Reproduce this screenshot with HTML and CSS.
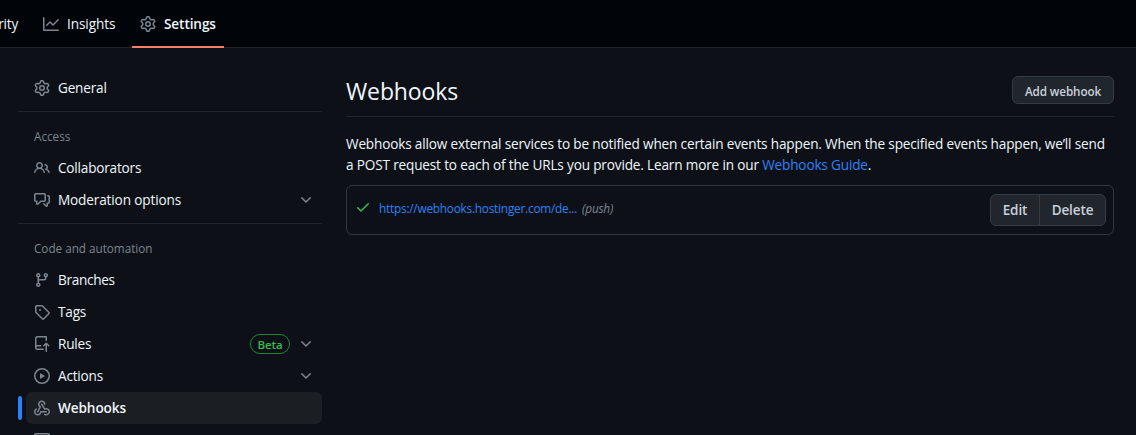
FILE: index.html
```
<!DOCTYPE html>
<html lang="en">
<head>
<meta charset="utf-8">
<title>Webhooks</title>
<link rel="stylesheet" href="styles.css">
</head>
<body>
<svg class="defs" aria-hidden="true">
  <symbol id="gear" viewBox="0 0 16 16"><path d="M8 0a8.2 8.2 0 0 1 .701.031C9.444.095 9.99.645 10.16 1.29l.288 1.107c.018.066.079.158.212.224.231.114.454.243.668.386.123.082.233.09.299.071l1.103-.303c.644-.176 1.392.021 1.82.63.27.385.506.792.704 1.218.315.675.111 1.422-.364 1.891l-.814.806c-.049.048-.098.147-.088.294.016.257.016.515 0 .772-.01.147.038.246.088.294l.814.806c.475.469.679 1.216.364 1.891a7.977 7.977 0 0 1-.704 1.217c-.428.61-1.176.807-1.82.63l-1.102-.302c-.067-.019-.177-.011-.3.071a5.909 5.909 0 0 1-.668.386c-.133.066-.194.158-.211.224l-.29 1.106c-.168.646-.715 1.196-1.458 1.26a8.006 8.006 0 0 1-1.402 0c-.743-.064-1.289-.614-1.458-1.26l-.289-1.106c-.018-.066-.079-.158-.212-.224a5.738 5.738 0 0 1-.668-.386c-.123-.082-.233-.09-.299-.071l-1.103.303c-.644.176-1.392-.021-1.82-.63a8.12 8.12 0 0 1-.704-1.218c-.315-.675-.111-1.422.363-1.891l.815-.806c.05-.048.098-.147.088-.294a6.214 6.214 0 0 1 0-.772c.01-.147-.038-.246-.088-.294l-.815-.806C.635 6.045.431 5.298.746 4.623a7.92 7.92 0 0 1 .704-1.217c.428-.61 1.176-.807 1.82-.63l1.102.302c.067.019.177.011.3-.071.214-.143.437-.272.668-.386.133-.066.194-.158.211-.224l.29-1.106C6.009.645 6.556.095 7.299.03 7.53.01 7.764 0 8 0Zm-.571 1.525c-.036.003-.108.036-.137.146l-.289 1.105c-.147.561-.549.967-.998 1.189-.173.086-.34.183-.5.29-.417.278-.97.423-1.529.27l-1.103-.303c-.109-.03-.175.016-.195.045-.22.312-.412.644-.573.99-.014.031-.021.11.059.19l.815.806c.411.406.562.957.53 1.456a4.709 4.709 0 0 0 0 .582c.032.499-.119 1.05-.53 1.456l-.815.806c-.081.08-.073.159-.059.19.162.346.353.677.573.989.02.03.085.076.195.046l1.102-.303c.56-.153 1.113-.008 1.53.27.161.107.328.204.501.29.447.222.85.629.997 1.189l.289 1.105c.029.109.101.143.137.146a6.6 6.6 0 0 0 1.142 0c.036-.003.108-.036.137-.146l.289-1.105c.147-.561.549-.967.998-1.189.173-.086.34-.183.5-.29.417-.278.97-.423 1.529-.27l1.103.303c.109.029.175-.016.195-.045.22-.313.411-.644.573-.99.014-.031.021-.11-.059-.19l-.815-.806c-.411-.406-.562-.957-.53-1.456a4.709 4.709 0 0 0 0-.582c-.032-.499.119-1.05.53-1.456l.815-.806c.081-.08.073-.159.059-.19a6.464 6.464 0 0 0-.573-.989c-.02-.03-.085-.076-.195-.046l-1.102.303c-.56.153-1.113.008-1.53-.27a4.44 4.44 0 0 0-.501-.29c-.447-.222-.85-.629-.997-1.189l-.289-1.105c-.029-.11-.101-.143-.137-.146a6.6 6.6 0 0 0-1.142 0ZM11 8a3 3 0 1 1-6 0 3 3 0 0 1 6 0ZM9.5 8a1.5 1.5 0 1 0-3.001.001A1.5 1.5 0 0 0 9.5 8Z"/></symbol>
  <symbol id="graph" viewBox="0 0 16 16"><path d="M1.5 1.75V13.5h13.75a.75.75 0 0 1 0 1.5H.75a.75.75 0 0 1-.75-.75V1.75a.75.75 0 0 1 1.5 0Zm14.28 2.53-5.25 5.25a.75.75 0 0 1-1.06 0L7 7.06 4.28 9.78a.751.751 0 0 1-1.042-.018.751.751 0 0 1-.018-1.042l3.25-3.25a.75.75 0 0 1 1.06 0L10 7.94l4.72-4.72a.751.751 0 0 1 1.042.018.751.751 0 0 1 .018 1.042Z"/></symbol>
  <symbol id="people" viewBox="0 0 16 16"><path d="M2 5.5a3.5 3.5 0 1 1 5.898 2.549 5.508 5.508 0 0 1 3.034 4.084.75.75 0 1 1-1.482.235 4 4 0 0 0-7.9 0 .75.75 0 0 1-1.482-.236A5.507 5.507 0 0 1 3.102 8.05 3.493 3.493 0 0 1 2 5.5ZM11 4a3.001 3.001 0 0 1 2.22 5.018 5.01 5.01 0 0 1 2.56 3.012.749.749 0 0 1-.885.954.752.752 0 0 1-.549-.514 3.507 3.507 0 0 0-2.522-2.372.75.75 0 0 1-.574-.73v-.352a.75.75 0 0 1 .416-.672A1.5 1.5 0 0 0 11 5.5.75.75 0 0 1 11 4Zm-5.5-.5a2 2 0 1 0-.001 3.999A2 2 0 0 0 5.5 3.5Z"/></symbol>
  <symbol id="discussion" viewBox="0 0 16 16"><path d="M1.75 1h8.5c.966 0 1.75.784 1.75 1.75v5.5A1.75 1.75 0 0 1 10.25 10H7.061l-2.574 2.573A1.458 1.458 0 0 1 2 11.543V10h-.25A1.75 1.75 0 0 1 0 8.25v-5.5C0 1.784.784 1 1.75 1ZM1.5 2.75v5.5c0 .138.112.25.25.25h1a.75.75 0 0 1 .75.75v2.19l2.72-2.72a.749.749 0 0 1 .53-.22h3.5a.25.25 0 0 0 .25-.25v-5.5a.25.25 0 0 0-.25-.25h-8.5a.25.25 0 0 0-.25.25Zm13 2a.25.25 0 0 0-.25-.25h-.5a.75.75 0 0 1 0-1.5h.5c.966 0 1.75.784 1.75 1.75v5.5A1.75 1.75 0 0 1 14.25 12H14v1.543a1.458 1.458 0 0 1-2.487 1.03L9.22 12.28a.749.749 0 0 1 .326-1.275.749.749 0 0 1 .734.215l2.22 2.22v-2.19a.75.75 0 0 1 .75-.75h1a.25.25 0 0 0 .25-.25Z"/></symbol>
  <symbol id="branch" viewBox="0 0 16 16"><path d="M9.5 3.25a2.25 2.25 0 1 1 3 2.122V6A2.5 2.5 0 0 1 10 8.5H6a1 1 0 0 0-1 1v1.128a2.251 2.251 0 1 1-1.5 0V5.372a2.25 2.25 0 1 1 1.5 0v1.836A2.493 2.493 0 0 1 6 7h4a1 1 0 0 0 1-1v-.628A2.25 2.25 0 0 1 9.5 3.25Zm-6 0a.75.75 0 1 0 1.5 0 .75.75 0 0 0-1.5 0Zm8.25-.75a.75.75 0 1 0 0 1.5.75.75 0 0 0 0-1.5ZM4.25 12a.75.75 0 1 0 0 1.5.75.75 0 0 0 0-1.5Z"/></symbol>
  <symbol id="tag" viewBox="0 0 16 16"><path d="M1 7.775V2.75C1 1.784 1.784 1 2.75 1h5.025c.464 0 .91.184 1.238.513l6.25 6.25a1.75 1.75 0 0 1 0 2.474l-5.026 5.026a1.75 1.75 0 0 1-2.474 0l-6.25-6.25A1.752 1.752 0 0 1 1 7.775Zm1.5 0c0 .066.026.13.073.177l6.25 6.25a.25.25 0 0 0 .354 0l5.025-5.025a.25.25 0 0 0 0-.354l-6.25-6.25a.25.25 0 0 0-.177-.073H2.75a.25.25 0 0 0-.25.25ZM6 5a1 1 0 1 1 0 2 1 1 0 0 1 0-2Z"/></symbol>
  <symbol id="repo-push" viewBox="0 0 16 16"><path d="M1 2.5A2.5 2.5 0 0 1 3.5 0h8.75a.75.75 0 0 1 .75.75v3.5a.75.75 0 0 1-1.5 0V1.5h-8a1 1 0 0 0-1 1v6.708A2.493 2.493 0 0 1 3.5 9h3.25a.75.75 0 0 1 0 1.5H3.5a1 1 0 0 0 0 2h5.75a.75.75 0 0 1 0 1.5H3.5A2.5 2.5 0 0 1 1 11.5Zm13.23 7.79h-.001l-1.224-1.224v6.184a.75.75 0 0 1-1.5 0V9.066L10.28 10.29a.75.75 0 0 1-1.06-1.061l2.505-2.504a.75.75 0 0 1 1.06 0L15.29 9.23a.751.751 0 0 1-.018 1.042.751.751 0 0 1-1.042.018Z"/></symbol>
  <symbol id="play" viewBox="0 0 16 16"><path d="M8 0a8 8 0 1 1 0 16A8 8 0 0 1 8 0ZM1.5 8a6.5 6.5 0 1 0 13 0 6.5 6.5 0 0 0-13 0Zm4.879-2.773 4.264 2.559a.25.25 0 0 1 0 .428l-4.264 2.559A.25.25 0 0 1 6 10.559V5.442a.25.25 0 0 1 .379-.215Z"/></symbol>
  <symbol id="webhook" viewBox="0 0 16 16"><path d="M5.5 4.25a2.25 2.25 0 0 1 4.5 0 .75.75 0 0 0 1.5 0 3.75 3.75 0 1 0-6.14 2.889l-2.272 4.258a.75.75 0 0 0 1.324.706L7 7.25a.75.75 0 0 0-.309-1.015A2.25 2.25 0 0 1 5.5 4.25Z"/><path d="M7.364 3.607a.75.75 0 0 1 1.03.257l2.608 4.349a3.75 3.75 0 1 1-.628 6.785.75.75 0 0 1 .752-1.299 2.25 2.25 0 1 0-.033-3.88.75.75 0 0 1-1.03-.256L7.107 4.636a.75.75 0 0 1 .257-1.03Z"/><path d="M2.9 8.776A.75.75 0 0 1 2.625 9.8 2.25 2.25 0 1 0 6 11.75a.75.75 0 0 1 .75-.751h5.5a.75.75 0 0 1 0 1.5H7.425a3.751 3.751 0 1 1-5.55-3.998.75.75 0 0 1 1.024.274Z"/></symbol>
  <symbol id="server" viewBox="0 0 16 16"><path d="M1.75 1h12.5c.966 0 1.75.784 1.75 1.75v4c0 .372-.116.717-.314 1 .198.283.314.628.314 1v4a1.75 1.75 0 0 1-1.75 1.75H1.75A1.75 1.75 0 0 1 0 12.75v-4c0-.358.109-.707.314-1a1.739 1.739 0 0 1-.314-1v-4C0 1.784.784 1 1.75 1ZM1.5 2.75v4c0 .138.112.25.25.25h12.5a.25.25 0 0 0 .25-.25v-4a.25.25 0 0 0-.25-.25H1.75a.25.25 0 0 0-.25.25Z"/></symbol>
  <symbol id="chevron" viewBox="0 0 16 16"><path d="M12.78 5.22a.749.749 0 0 1 0 1.06l-4.25 4.25a.749.749 0 0 1-1.06 0L3.22 6.28a.749.749 0 1 1 1.06-1.06L8 8.939l3.72-3.719a.749.749 0 0 1 1.06 0Z"/></symbol>
  <symbol id="check" viewBox="0 0 16 16"><path d="M13.78 4.22a.75.75 0 0 1 0 1.06l-7.25 7.25a.75.75 0 0 1-1.06 0L2.22 9.28a.751.751 0 0 1 .018-1.042.751.751 0 0 1 1.042-.018L6 10.94l6.72-6.72a.75.75 0 0 1 1.06 0Z"/></symbol>
</svg>
<header class="topnav">
  <a class="tab tab-security"><span class="label">Security</span></a>
  <a class="tab tab-insights"><svg class="icon"><use href="#graph"/></svg><span class="label">Insights</span></a>
  <a class="tab tab-current"><svg class="icon"><use href="#gear"/></svg><span class="label">Settings</span></a>
</header>
<div class="layout">
  <nav class="sidebar">
    <a class="item"><svg class="icon"><use href="#gear"/></svg><span class="label">General</span></a>
    <hr class="divider">
    <h3 class="group">Access</h3>
    <a class="item"><svg class="icon"><use href="#people"/></svg><span class="label">Collaborators</span></a>
    <a class="item"><svg class="icon"><use href="#discussion"/></svg><span class="label moderation">Moderation options</span><svg class="icon chevron"><use href="#chevron"/></svg></a>
    <hr class="divider">
    <h3 class="group">Code and automation</h3>
    <a class="item"><svg class="icon"><use href="#branch"/></svg><span class="label branches">Branches</span></a>
    <a class="item"><svg class="icon"><use href="#tag"/></svg><span class="label">Tags</span></a>
    <a class="item"><svg class="icon"><use href="#repo-push"/></svg><span class="label">Rules</span><span class="badge">Beta</span><svg class="icon chevron"><use href="#chevron"/></svg></a>
    <a class="item"><svg class="icon"><use href="#play"/></svg><span class="label">Actions</span><svg class="icon chevron"><use href="#chevron"/></svg></a>
    <a class="item item-current"><svg class="icon"><use href="#webhook"/></svg><span class="label">Webhooks</span></a>
    <a class="item"><svg class="icon"><use href="#server"/></svg></a>
  </nav>
  <main class="content">
    <div class="subhead">
      <h2 class="title">Webhooks</h2>
      <button class="btn btn-small">Add webhook</button>
    </div>
    <p class="intro">Webhooks allow external services to be notified when certain events happen. When the specified events happen, we’ll send<br>a POST request to each of the URLs you provide. Learn more in our <a class="link">Webhooks Guide</a>.</p>
    <div class="hook">
      <svg class="icon check"><use href="#check"/></svg>
      <a class="link hook-url">https://webhooks.hostinger.com/de...</a>
      <em class="events">(push)</em>
      <div class="btn-group"><button class="btn btn-edit">Edit</button><button class="btn btn-delete">Delete</button></div>
    </div>
  </main>
</div>
</body>
</html>
```

FILE: styles.css
```
* { box-sizing: border-box; }

body {
  margin: 0;
  height: 435px;
  overflow: hidden;
  background: #0d1117;
  color: #f0f6fc;
  font: 13.6px/21px "Open Sans", "Noto Sans", sans-serif;
  letter-spacing: -0.2px;
}

.defs { display: none; }

.icon {
  width: 16px;
  height: 16px;
  flex: none;
  fill: #7d8590;
}

.label { margin-bottom: 2px; }

.topnav {
  display: flex;
  height: 48px;
  background: #010409;
  border-bottom: 1px solid #21262d;
}

.tab {
  display: flex;
  align-items: center;
  gap: 8px;
  height: 48px;
  flex: none;
  white-space: nowrap;
}

.tab-security { width: 18px; justify-content: flex-end; }
.tab-insights { margin-left: 25px; width: 89px; letter-spacing: -0.1px; }

.tab-current {
  width: 92px;
  padding-left: 8px;
  border-bottom: 2px solid #f78166;
  padding-top: 2px;
  font-weight: 600;
  letter-spacing: -0.1px;
}

.layout {
  display: flex;
  gap: 24px;
  padding: 24px 22px 0 18px;
}

.sidebar { width: 304px; flex: none; }

.item {
  position: relative;
  display: flex;
  align-items: center;
  gap: 8px;
  height: 32px;
  padding: 0 8px 0 16px;
}

.moderation { letter-spacing: -0.14px; }
.branches { letter-spacing: -0.3px; }

.item-current {
  margin-left: 8px;
  padding-left: 8px;
  border-radius: 6px;
  background: #1b1f23;
  font-weight: 600;
  letter-spacing: -0.1px;
}

.item-current::before {
  content: "";
  position: absolute;
  left: -8px;
  top: 4px;
  width: 4px;
  height: 24px;
  border-radius: 6px;
  background: #2f81f7;
}

.chevron { margin-left: auto; }

.badge {
  margin-left: auto;
  width: 40px;
  height: 20px;
  border: 1px solid #238636;
  border-radius: 10px;
  color: #3fb950;
  font-size: 11.5px;
  line-height: 19px;
  font-weight: 600;
  letter-spacing: -0.15px;
  text-align: center;
}

.badge + .chevron { margin-left: 0; }

.divider {
  height: 1px;
  margin: 7px 0 8px;
  border: 0;
  background: #21262d;
}

.group {
  margin: 0;
  padding-left: 16px;
  height: 32px;
  color: #7d8590;
  font-size: 11.7px;
  font-weight: 500;
  line-height: 32px;
  letter-spacing: 0;
}

.content { width: 768px; padding-top: 4px; }

.subhead {
  display: flex;
  justify-content: space-between;
  height: 41px;
  border-bottom: 1px solid #21262d;
}

.title {
  margin: 0;
  font-size: 23px;
  font-weight: 400;
  line-height: 31px;
  letter-spacing: -0.12px;
}

.btn {
  padding: 0;
  border: 1px solid #363b42;
  border-radius: 6px;
  background: #21262d;
  color: #c9d1d9;
  font: 600 13.5px/20px "Open Sans", "Noto Sans", sans-serif;
  letter-spacing: -0.1px;
}

.btn-small { width: 102px; height: 28px; padding-top: 1px; font-size: 11.7px; }

.intro { margin: 16px 0 10px; white-space: nowrap; letter-spacing: -0.165px; }

.link { color: #2f81f7; }

.hook {
  display: flex;
  height: 50px;
  padding: 8px 7px 0 8px;
  border: 1px solid #30363d;
  border-radius: 6px;
  font-size: 11.8px;
}

.check { margin-top: 5px; fill: #3fb950; }
.hook-url { margin: 4px 0 0 8px; letter-spacing: -0.22px; }
.events { margin: 4px 0 0 5px; color: #7d8590; }

.btn-group { display: flex; margin-left: auto; }
.btn-group .btn { height: 32px; }
.btn-group .btn-edit { width: 50px; border-radius: 6px 0 0 6px; }
.btn-group .btn-delete { width: 67px; margin-left: -1px; border-radius: 0 6px 6px 0; }
```
